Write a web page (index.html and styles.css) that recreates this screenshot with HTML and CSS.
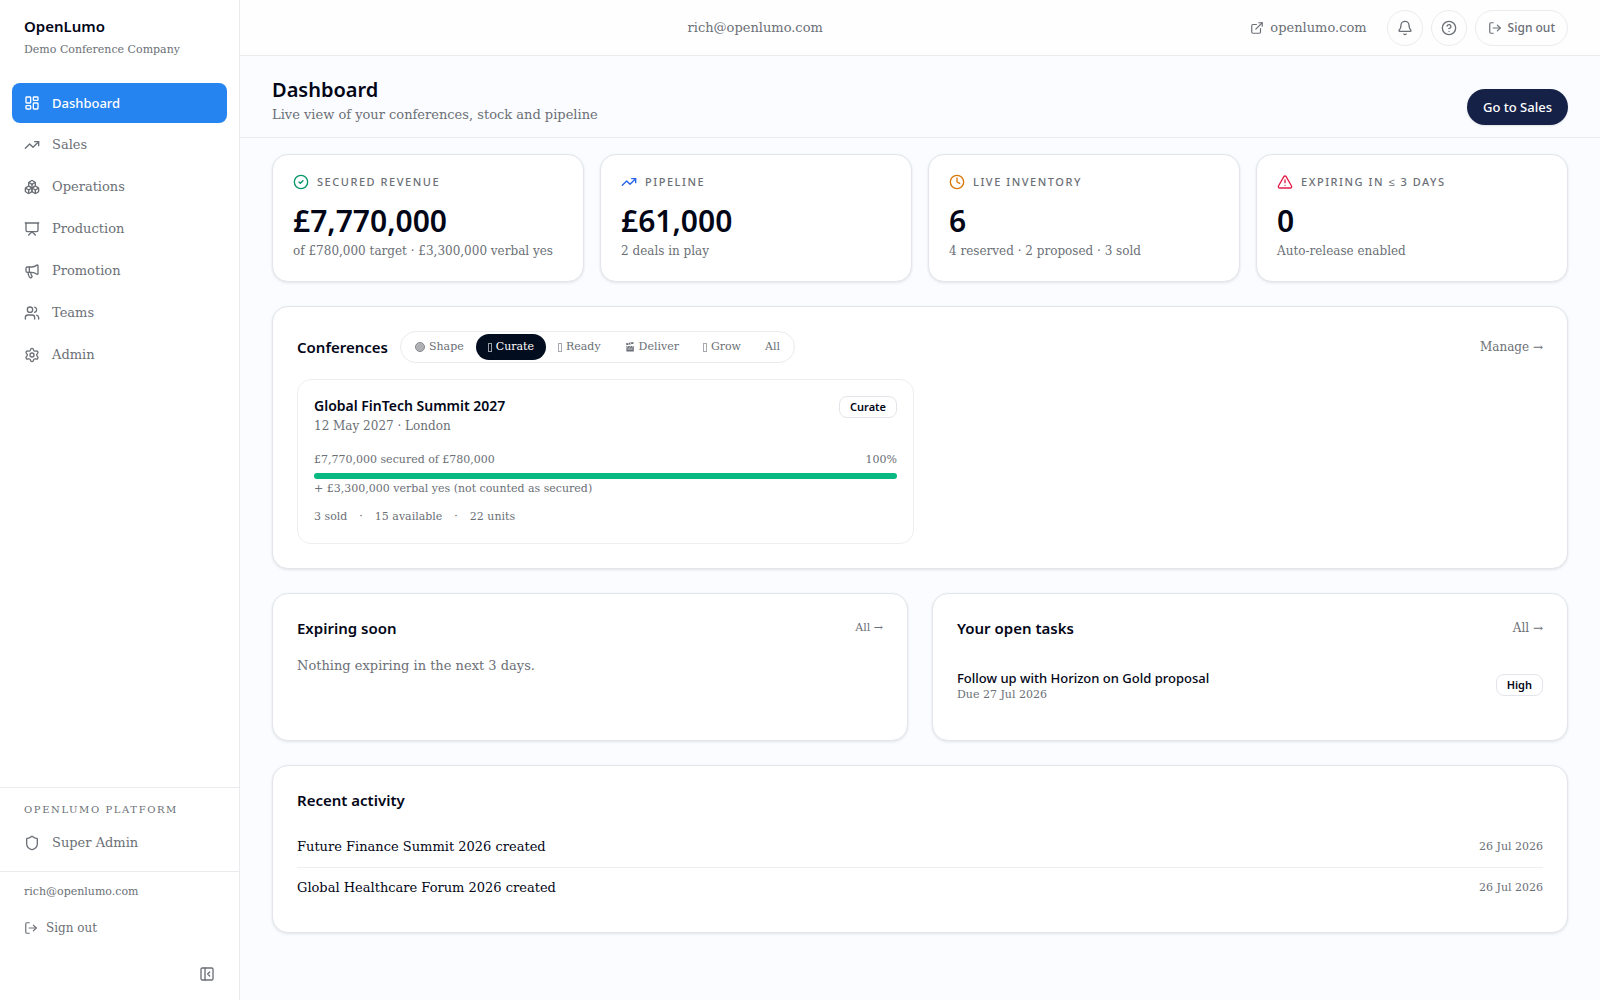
FILE: index.html
```html
<!DOCTYPE html>
<html lang="en">
<head>
    <meta charset="UTF-8">
    <meta name="viewport" content="width=device-width, initial-scale=1.0">
    <title>Dashboard - OpenLumo</title>
    <link rel="stylesheet" href="styles.css">
</head>
<body>
    <div class="app">
        <aside class="sidebar">
            <div class="brand">
                <div class="brand-name">OpenLumo</div>
                <div class="brand-org">Demo Conference Company</div>
            </div>
            <nav class="nav">
                <a href="#" class="nav-item active">
                    <svg class="icon" viewBox="0 0 24 24"><rect width="7" height="9" x="3" y="3" rx="1"/><rect width="7" height="5" x="14" y="3" rx="1"/><rect width="7" height="9" x="14" y="12" rx="1"/><rect width="7" height="5" x="3" y="16" rx="1"/></svg>
                    <span>Dashboard</span>
                </a>
                <a href="#" class="nav-item">
                    <svg class="icon" viewBox="0 0 24 24"><path d="M16 7h6v6"/><path d="m22 7-8.5 8.5-5-5L2 17"/></svg>
                    <span>Sales</span>
                </a>
                <a href="#" class="nav-item">
                    <svg class="icon" viewBox="0 0 24 24"><path d="M2.97 12.92A2 2 0 0 0 2 14.63v3.24a2 2 0 0 0 .97 1.71l3 1.8a2 2 0 0 0 2.06 0L12 19v-5.5l-5-3-4.03 2.42Z"/><path d="m7 16.5-4.74-2.85"/><path d="m7 16.5 5-3"/><path d="M7 16.5v5.17"/><path d="M12 13.5V19l3.97 2.38a2 2 0 0 0 2.06 0l3-1.8a2 2 0 0 0 .97-1.71v-3.24a2 2 0 0 0-.97-1.71L17 10.5l-5 3Z"/><path d="m17 16.5-5-3"/><path d="m17 16.5 4.74-2.85"/><path d="M17 16.5v5.17"/><path d="M7.97 4.42A2 2 0 0 0 7 6.13v4.37l5 3 5-3V6.13a2 2 0 0 0-.97-1.71l-3-1.8a2 2 0 0 0-2.06 0l-3 1.8Z"/><path d="M12 8 7.26 5.15"/><path d="m12 8 4.74-2.85"/><path d="M12 13.5V8"/></svg>
                    <span>Operations</span>
                </a>
                <a href="#" class="nav-item">
                    <svg class="icon" viewBox="0 0 24 24"><path d="M2 3h20"/><path d="M21 3v11a2 2 0 0 1-2 2H5a2 2 0 0 1-2-2V3"/><path d="m7 21 5-5 5 5"/></svg>
                    <span>Production</span>
                </a>
                <a href="#" class="nav-item">
                    <svg class="icon" viewBox="0 0 24 24"><path d="M11 6a13 13 0 0 0 8.4-2.8A1 1 0 0 1 21 4v12a1 1 0 0 1-1.6.8A13 13 0 0 0 11 14H5a2 2 0 0 1-2-2V8a2 2 0 0 1 2-2z"/><path d="M6 14a12 12 0 0 0 2.4 7.2 2 2 0 0 0 3.2-2.4A8 8 0 0 1 10 14"/><path d="M8 6v8"/></svg>
                    <span>Promotion</span>
                </a>
                <a href="#" class="nav-item">
                    <svg class="icon" viewBox="0 0 24 24"><path d="M16 21v-2a4 4 0 0 0-4-4H6a4 4 0 0 0-4 4v2"/><path d="M16 3.128a4 4 0 0 1 0 7.744"/><path d="M22 21v-2a4 4 0 0 0-3-3.87"/><circle cx="9" cy="7" r="4"/></svg>
                    <span>Teams</span>
                </a>
                <a href="#" class="nav-item">
                    <svg class="icon" viewBox="0 0 24 24"><path d="M9.671 4.136a2.34 2.34 0 0 1 4.659 0 2.34 2.34 0 0 0 3.319 1.915 2.34 2.34 0 0 1 2.33 4.033 2.34 2.34 0 0 0 0 3.831 2.34 2.34 0 0 1-2.33 4.033 2.34 2.34 0 0 0-3.319 1.915 2.34 2.34 0 0 1-4.659 0 2.34 2.34 0 0 0-3.32-1.915 2.34 2.34 0 0 1-2.33-4.033 2.34 2.34 0 0 0 0-3.831A2.34 2.34 0 0 1 6.35 6.051a2.34 2.34 0 0 0 3.319-1.915"/><circle cx="12" cy="12" r="3"/></svg>
                    <span>Admin</span>
                </a>
            </nav>
            <div class="platform">
                <div class="platform-label">OpenLumo Platform</div>
                <a href="#" class="nav-item">
                    <svg class="icon" viewBox="0 0 24 24"><path d="M20 13c0 5-3.5 7.5-7.66 8.95a1 1 0 0 1-.67-.01C7.5 20.5 4 18 4 13V6a1 1 0 0 1 1-1c2 0 4.5-1.2 6.24-2.72a1.17 1.17 0 0 1 1.52 0C14.51 3.81 17 5 19 5a1 1 0 0 1 1 1z"/></svg>
                    <span>Super Admin</span>
                </a>
            </div>
            <div class="account">
                <div class="account-email">rich@openlumo.com</div>
                <button type="button" class="account-signout">
                    <svg class="icon icon-sm" viewBox="0 0 24 24"><path d="m16 17 5-5-5-5"/><path d="M21 12H9"/><path d="M9 21H5a2 2 0 0 1-2-2V5a2 2 0 0 1 2-2h4"/></svg>
                    <span>Sign out</span>
                </button>
            </div>
            <button type="button" class="collapse" aria-label="Collapse sidebar">
                <svg class="icon" viewBox="0 0 24 24"><rect width="18" height="18" x="3" y="3" rx="2"/><path d="M9 3v18"/><path d="m16 15-3-3 3-3"/></svg>
            </button>
        </aside>

        <div class="main">
            <header class="topbar">
                <div></div>
                <div class="topbar-email">rich@openlumo.com</div>
                <div class="topbar-actions">
                    <a href="#" class="site-link">
                        <svg class="icon icon-sm" viewBox="0 0 24 24"><path d="M15 3h6v6"/><path d="M10 14 21 3"/><path d="M18 13v6a2 2 0 0 1-2 2H5a2 2 0 0 1-2-2V8a2 2 0 0 1 2-2h6"/></svg>
                        <span>openlumo.com</span>
                    </a>
                    <button type="button" class="round-btn" aria-label="Notifications">
                        <svg class="icon" viewBox="0 0 24 24"><path d="M10.268 21a2 2 0 0 0 3.464 0"/><path d="M3.262 15.326A1 1 0 0 0 4 17h16a1 1 0 0 0 .74-1.673C19.41 13.956 18 12.499 18 8A6 6 0 0 0 6 8c0 4.499-1.411 5.956-2.738 7.326"/></svg>
                    </button>
                    <button type="button" class="round-btn" aria-label="Help">
                        <svg class="icon" viewBox="0 0 24 24"><circle cx="12" cy="12" r="10"/><path d="M9.09 9a3 3 0 0 1 5.83 1c0 2-3 3-3 3"/><path d="M12 17h.01"/></svg>
                    </button>
                    <button type="button" class="round-btn signout-btn">
                        <svg class="icon icon-sm" viewBox="0 0 24 24"><path d="m16 17 5-5-5-5"/><path d="M21 12H9"/><path d="M9 21H5a2 2 0 0 1-2-2V5a2 2 0 0 1 2-2h4"/></svg>
                        <span>Sign out</span>
                    </button>
                </div>
            </header>

            <div class="page-header">
                <div>
                    <h1>Dashboard</h1>
                    <p>Live view of your conferences, stock and pipeline</p>
                </div>
                <a href="#" class="primary-btn">Go to Sales</a>
            </div>

            <main class="content">
                <section class="stats">
                    <div class="card stat">
                        <div class="stat-label">
                            <svg class="icon green" viewBox="0 0 24 24"><circle cx="12" cy="12" r="10"/><path d="m9 12 2 2 4-4"/></svg>
                            <span>Secured revenue</span>
                        </div>
                        <div class="stat-value">£7,770,000</div>
                        <div class="stat-note">of £780,000 target · £3,300,000 verbal yes</div>
                    </div>
                    <div class="card stat">
                        <div class="stat-label">
                            <svg class="icon blue" viewBox="0 0 24 24"><path d="M16 7h6v6"/><path d="m22 7-8.5 8.5-5-5L2 17"/></svg>
                            <span>Pipeline</span>
                        </div>
                        <div class="stat-value">£61,000</div>
                        <div class="stat-note">2 deals in play</div>
                    </div>
                    <div class="card stat">
                        <div class="stat-label">
                            <svg class="icon amber" viewBox="0 0 24 24"><circle cx="12" cy="12" r="10"/><path d="M12 6v6l4 2"/></svg>
                            <span>Live inventory</span>
                        </div>
                        <div class="stat-value">6</div>
                        <div class="stat-note">4 reserved · 2 proposed · 3 sold</div>
                    </div>
                    <div class="card stat">
                        <div class="stat-label">
                            <svg class="icon red" viewBox="0 0 24 24"><path d="m21.73 18-8-14a2 2 0 0 0-3.48 0l-8 14A2 2 0 0 0 4 21h16a2 2 0 0 0 1.73-3"/><path d="M12 9v4"/><path d="M12 17h.01"/></svg>
                            <span>Expiring in ≤ 3 days</span>
                        </div>
                        <div class="stat-value">0</div>
                        <div class="stat-note">Auto-release enabled</div>
                    </div>
                </section>

                <section class="card panel">
                    <div class="panel-head">
                        <div class="panel-title">
                            <h2>Conferences</h2>
                            <div class="tabs">
                                <button type="button" class="tab">
                                    <svg class="tab-icon" viewBox="0 0 10 10"><circle cx="5" cy="5" r="4.5" fill="#b4b6b8" stroke="#85888c"/><path d="M2 6 6 2M3 8l5-5M5 9l4-4" stroke="#96999c" stroke-width=".6"/></svg>
                                    Shape
                                </button>
                                <button type="button" class="tab active"><span class="tab-box"></span>Curate</button>
                                <button type="button" class="tab"><span class="tab-box"></span>Ready</button>
                                <button type="button" class="tab">
                                    <svg class="tab-icon" viewBox="0 0 10 10"><path d="M1 1.2 8.3 0l.3 1.8L1.4 3.2zM1.4 4h7.4v5.5H1.4z" fill="#6b6f76"/><path d="m3 .8 1 2M5.2.5l1 2M3 4 2 5.6M5.5 4l-1 1.6M8 4 7 5.6M2.5 7h5" stroke="#fff" stroke-width=".7"/></svg>
                                    Deliver
                                </button>
                                <button type="button" class="tab"><span class="tab-box"></span>Grow</button>
                                <button type="button" class="tab">All</button>
                            </div>
                        </div>
                        <a href="#" class="more">Manage →</a>
                    </div>
                    <div class="conferences">
                        <a href="#" class="conference">
                            <div class="conference-head">
                                <div>
                                    <h3>Global FinTech Summit 2027</h3>
                                    <div class="conference-meta">12 May 2027 · London</div>
                                </div>
                                <span class="badge">Curate</span>
                            </div>
                            <div class="progress-labels">
                                <span>£7,770,000 secured of £780,000</span>
                                <span>100%</span>
                            </div>
                            <div class="progress"><div class="progress-bar" style="width: 100%"></div></div>
                            <div class="verbal">+ £3,300,000 verbal yes (not counted as secured)</div>
                            <div class="units">
                                <span>3 sold</span>
                                <span>·</span>
                                <span>15 available</span>
                                <span>·</span>
                                <span>22 units</span>
                            </div>
                        </a>
                    </div>
                </section>

                <div class="two-col">
                    <section class="card panel">
                        <div class="panel-head">
                            <h2>Expiring soon</h2>
                            <a href="#" class="more more-sm">All →</a>
                        </div>
                        <p class="empty">Nothing expiring in the next 3 days.</p>
                    </section>
                    <section class="card panel">
                        <div class="panel-head">
                            <h2>Your open tasks</h2>
                            <a href="#" class="more">All →</a>
                        </div>
                        <div class="task">
                            <div>
                                <div class="task-name">Follow up with Horizon on Gold proposal</div>
                                <div class="task-due">Due 27 Jul 2026</div>
                            </div>
                            <span class="badge">High</span>
                        </div>
                    </section>
                </div>

                <section class="card panel">
                    <div class="panel-head">
                        <h2>Recent activity</h2>
                    </div>
                    <ul class="activity">
                        <li><span>Future Finance Summit 2026 created</span><time>26 Jul 2026</time></li>
                        <li><span>Global Healthcare Forum 2026 created</span><time>26 Jul 2026</time></li>
                    </ul>
                </section>
            </main>
        </div>
    </div>
</body>
</html>
```
FILE: styles.css
```css
* {
    box-sizing: border-box;
}

body {
    margin: 0;
    font-family: "DejaVu Serif", serif;
    font-size: 13px;
    line-height: 20px;
    color: #020617;
    background-color: #fbfcff;
}

h1, h2, h3, p, ul {
    margin: 0;
    padding: 0;
}

h1, h2, h3 {
    font-family: "Noto Sans", sans-serif;
    font-weight: 600;
}

a {
    color: inherit;
    text-decoration: none;
}

button {
    font: inherit;
    color: inherit;
    background: none;
    border: none;
    padding: 0;
    cursor: pointer;
}

.icon {
    width: 16px;
    height: 16px;
    flex-shrink: 0;
    fill: none;
    stroke: currentColor;
    stroke-width: 2;
    stroke-linecap: round;
    stroke-linejoin: round;
}

.icon-sm {
    width: 14px;
    height: 14px;
}

.green { color: #059669; }
.blue { color: #2563eb; }
.amber { color: #d97706; }
.red { color: #e11d48; }

.app {
    display: flex;
    min-height: 100vh;
}

/* Sidebar */
.sidebar {
    width: 240px;
    height: 100vh;
    position: sticky;
    top: 0;
    flex-shrink: 0;
    display: flex;
    flex-direction: column;
    background-color: #fff;
    border-right: 1px solid #e9ebee;
    color: #6b6f76;
}

.brand {
    padding: 15px 24px 23px;
}

.brand-name {
    margin-bottom: 2px;
    font-family: "Noto Sans", sans-serif;
    font-size: 15px;
    font-weight: 600;
    line-height: 23px;
    color: #020617;
}

.brand-org {
    font-size: 11px;
}

.nav {
    flex: 1;
    display: flex;
    flex-direction: column;
    gap: 2px;
    padding: 0 12px;
}

.nav-item {
    display: flex;
    align-items: center;
    gap: 12px;
    height: 40px;
    padding: 0 12px;
    border-radius: 8px;
}

.nav-item.active {
    font-family: "Noto Sans", sans-serif;
    font-weight: 500;
    color: #fff;
    background-color: #2684f0;
}

.platform {
    padding: 12px 12px 8px;
    border-top: 1px solid #e9ebee;
}

.platform-label {
    margin-bottom: 3px;
    padding: 0 12px;
    font-size: 10px;
    letter-spacing: 0.16em;
    text-transform: uppercase;
}

.account {
    padding: 10px 24px 8px;
    border-top: 1px solid #e9ebee;
}

.account-email {
    font-size: 11px;
}

.account-signout {
    display: flex;
    align-items: center;
    gap: 8px;
    height: 36px;
    margin-top: 8px;
    font-size: 12px;
}

.collapse {
    display: flex;
    align-self: flex-end;
    margin: 12px 24px 18px;
}

/* Top bar */
.main {
    flex: 1;
    min-width: 0;
}

.topbar {
    display: flex;
    align-items: center;
    justify-content: space-between;
    height: 56px;
    padding: 0 32px;
    background-color: #fefeff;
    border-bottom: 1px solid #e9ebee;
    color: #6b6f76;
}

.topbar-actions {
    display: flex;
    align-items: center;
    gap: 8px;
}

.site-link {
    display: flex;
    align-items: center;
    gap: 6px;
    padding: 0 12px;
}

.round-btn {
    display: flex;
    align-items: center;
    justify-content: center;
    gap: 6px;
    width: 36px;
    height: 36px;
    border: 1px solid #e9ebee;
    border-radius: 18px;
}

.signout-btn {
    width: auto;
    padding: 0 12px;
    font-family: "Noto Sans", sans-serif;
    font-size: 12px;
    font-weight: 500;
}

.page-header {
    display: flex;
    align-items: flex-end;
    justify-content: space-between;
    padding: 20px 32px 12px;
    border-bottom: 1px solid #e9ebee;
}

.page-header h1 {
    font-size: 20px;
    line-height: 28px;
}

.page-header p {
    line-height: 21px;
    color: #6b6f76;
}

.primary-btn {
    height: 36px;
    padding: 0 16px;
    border-radius: 18px;
    font-family: "Noto Sans", sans-serif;
    font-weight: 500;
    line-height: 36px;
    color: #fff;
    background-color: #152147;
    box-shadow: 0 1px 2px rgba(0, 0, 0, 0.1);
}

/* Content */
.content {
    display: flex;
    flex-direction: column;
    gap: 24px;
    padding: 16px 32px 32px;
}

.card {
    background-color: #fff;
    border: 1px solid #e2e5ea;
    border-radius: 16px;
    box-shadow: 0 1px 3px rgba(0, 0, 0, 0.1);
}

.stats {
    display: grid;
    grid-template-columns: repeat(4, 1fr);
    gap: 16px;
}

.stat {
    padding: 16px 20px 22px;
    color: #6b6f76;
}

.stat-label {
    display: flex;
    align-items: center;
    gap: 8px;
    height: 22px;
    font-family: "Noto Sans", sans-serif;
    font-size: 11px;
    font-weight: 500;
    letter-spacing: 0.14em;
    text-transform: uppercase;
}

.stat-value {
    margin: 10px 0 4px;
    font-family: "Noto Sans", sans-serif;
    font-size: 30px;
    font-weight: 600;
    line-height: 36px;
    color: #020617;
}

.stat-note {
    font-size: 12px;
    line-height: 16px;
}

.panel {
    padding: 24px;
}

.panel-head {
    display: flex;
    align-items: center;
    justify-content: space-between;
}

.panel-head h2 {
    font-size: 15px;
    line-height: 20px;
}

.panel-title {
    display: flex;
    align-items: center;
    gap: 12px;
}

.tabs {
    display: flex;
    padding: 2px;
    border: 1px solid #e9ebee;
    border-radius: 16px;
}

.tab {
    display: flex;
    align-items: center;
    gap: 4px;
    height: 26px;
    padding: 0 12px;
    border-radius: 13px;
    font-size: 11px;
    color: #6b6f76;
}

.tab.active {
    color: #fff;
    background-color: #020d20;
}

.tab-icon {
    width: 10px;
    height: 10px;
}

.tab-box {
    width: 4px;
    height: 9px;
    border: 1px solid currentColor;
    opacity: 0.6;
}

.more {
    font-size: 12px;
    color: #6b6f76;
}

.more-sm {
    font-size: 11px;
}

.conferences {
    display: grid;
    grid-template-columns: 1fr 1fr;
    gap: 12px;
    margin-top: 16px;
}

.conference {
    padding: 16px;
    border: 1px solid #eceef1;
    border-radius: 14px;
    font-size: 11px;
    color: #6b6f76;
}

.conference-head {
    display: flex;
    align-items: flex-start;
    justify-content: space-between;
}

.conference h3 {
    font-size: 14px;
    line-height: 20px;
    color: #020617;
}

.conference-meta {
    font-size: 12px;
}

.badge {
    padding: 0 10px;
    border: 1px solid #e2e5ea;
    border-radius: 8px;
    font-family: "Noto Sans", sans-serif;
    font-size: 11px;
    font-weight: 600;
    line-height: 20px;
    color: #020617;
}

.progress-labels {
    display: flex;
    justify-content: space-between;
    margin-top: 14px;
}

.progress {
    height: 6px;
    margin-top: 3px;
    border-radius: 3px;
    background-color: #eef0f3;
}

.progress-bar {
    height: 6px;
    border-radius: 3px;
    background-color: #08b981;
}

.units {
    display: flex;
    gap: 12px;
    margin-top: 8px;
}

.two-col {
    display: grid;
    grid-template-columns: 1fr 1fr;
    gap: 24px;
}

.empty {
    margin-top: 18px;
    color: #6b6f76;
}

.task {
    display: flex;
    align-items: center;
    justify-content: space-between;
    margin-top: 16px;
    padding: 14px 0;
}

.task-name {
    font-family: "Noto Sans", sans-serif;
    font-weight: 500;
}

.task-due {
    font-size: 11px;
    line-height: 14px;
    color: #6b6f76;
}

.activity {
    margin-top: 17px;
    list-style: none;
}

.activity li {
    display: flex;
    justify-content: space-between;
    padding: 10px 0;
}

.activity li + li {
    border-top: 1px solid #eceef1;
}

.activity time {
    font-size: 11px;
    color: #6b6f76;
}
```
